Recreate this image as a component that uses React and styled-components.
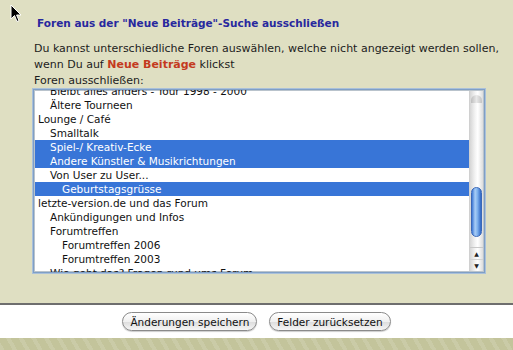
import React from 'react';
import styled, { createGlobalStyle } from 'styled-components';

const GlobalStyle = createGlobalStyle`
  html, body {
    margin: 0;
    padding: 0;
    background: #ffffff;
  }
  body {
    font-family: "DejaVu Sans", "Liberation Sans", sans-serif;
    color: #1c1c1c;
  }
`;

const Screen = styled.div`
  position: relative;
  width: 513px;
  height: 350px;
  overflow: hidden;
  display: flex;
  flex-direction: column;
`;

const Panel = styled.div`
  height: 303px;
  background: #dfdfc2;
  box-sizing: border-box;
  padding: 16px 0 0 33px;
  display: flex;
  flex-direction: column;
`;

const Title = styled.h3`
  margin: 0 0 0 4px;
  font-size: 10.5px;
  font-weight: bold;
  color: #28289e;
  line-height: 14px;
`;

const Intro = styled.p`
  margin: 11px 0 0 1px;
  font-size: 11px;
  line-height: 16px;
`;

const Highlight = styled.span`
  color: #c43a1e;
  font-weight: bold;
`;

const ListBox = styled.div`
  margin-top: 0;
  width: 452px;
  height: 184px;
  box-sizing: border-box;
  border: 1px solid #7f9fc6;
  box-shadow: 0 0 0 1px #a9c0da, inset 0 0 0 1px #b9c3cc;
  background: #ffffff;
  display: flex;
  overflow: hidden;
`;

const Items = styled.ul`
  flex: 1;
  list-style: none;
  margin: -6px 0 0 1px;
  padding: 0;
`;

const Item = styled.li`
  height: 14px;
  line-height: 14px;
  font-size: 10.5px;
  white-space: nowrap;
  padding-left: ${p => 3 + p.$level * 12}px;
  background: ${p => (p.$selected ? '#3875d7' : 'transparent')};
  color: ${p => (p.$selected ? '#ffffff' : '#111111')};
`;

const Scrollbar = styled.div`
  width: 13px;
  margin: 1px 1px 1px 0;
  display: flex;
  flex-direction: column;
  background: linear-gradient(to right, #d6d6d6, #f4f4f4 40%, #ffffff 60%, #dcdcdc);
  border-left: 1px solid #d0d0d0;
`;

const Track = styled.div`
  flex: 1;
  display: flex;
  flex-direction: column;
  padding: 4px 1px 6px 1px;
`;

const TrackCap = styled.div`
  height: 8px;
  border-radius: 6px 6px 0 0;
  background: linear-gradient(to right, #bdbdbd, #e8e8e8 50%, #c4c4c4);
`;

const Thumb = styled.div`
  height: 50px;
  margin-top: ${p => p.$offset}px;
  border-radius: 6px;
  border: 1px solid #3a68b8;
  box-sizing: border-box;
  background: linear-gradient(to right, #3d78d6, #a9cdf6 35%, #7fb2ee 60%, #2f66c4);
`;

const Arrows = styled.div`
  display: flex;
  flex-direction: column;
  border-top: 1px solid #c8c8c8;
`;

const Arrow = styled.div`
  height: 11px;
  display: flex;
  align-items: center;
  justify-content: center;
  font-size: 6px;
  color: #222;
  border-top: ${p => (p.$down ? '1px solid #d4d4d4' : 'none')};
`;

const Divider = styled.div`
  height: 2px;
  background: #6e6e6e;
`;

const Footer = styled.div`
  height: 33px;
  background: #ffffff;
  display: flex;
  align-items: center;
  justify-content: center;
  gap: 12px;
`;

const Button = styled.button`
  height: 19px;
  padding: 0 7px;
  border-radius: 10px;
  border: 1px solid #8a8a8a;
  background: linear-gradient(to bottom, #ffffff, #f0f0f0 50%, #dedede 55%, #f6f6f6);
  font-family: "DejaVu Sans", "Liberation Sans", sans-serif;
  font-size: 10.5px;
  color: #111;
  box-shadow: 0 1px 1px rgba(0, 0, 0, 0.2);
`;

const Pattern = styled.div`
  flex: 1;
  background:
    repeating-linear-gradient(60deg, rgba(255,255,255,0.12) 0 4px, transparent 4px 11px),
    #c3c49b;
`;

const Cursor = styled.svg`
  position: absolute;
  left: 10px;
  top: 4px;
`;

const rows = [
  { label: 'Bleibt alles anders - Tour 1998 - 2000', level: 1 },
  { label: 'Ältere Tourneen', level: 1 },
  { label: 'Lounge / Café', level: 0 },
  { label: 'Smalltalk', level: 1 },
  { label: 'Spiel-/ Kreativ-Ecke', level: 1, selected: true },
  { label: 'Andere Künstler & Musikrichtungen', level: 1, selected: true },
  { label: 'Von User zu User...', level: 1 },
  { label: 'Geburtstagsgrüsse', level: 2, selected: true },
  { label: 'letzte-version.de und das Forum', level: 0 },
  { label: 'Ankündigungen und Infos', level: 1 },
  { label: 'Forumtreffen', level: 1 },
  { label: 'Forumtreffen 2006', level: 2 },
  { label: 'Forumtreffen 2003', level: 2 },
  { label: 'Wie geht das? Fragen rund ums Forum', level: 1 },
];

export default function App() {
  return (
    <Screen>
      <GlobalStyle />
      <Panel>
        <Title>Foren aus der "Neue Beiträge"-Suche ausschließen</Title>
        <Intro>
          Du kannst unterschiedliche Foren auswählen, welche nicht angezeigt werden sollen,<br />
          wenn Du auf <Highlight>Neue Beiträge</Highlight> klickst<br />
          Foren ausschließen:
        </Intro>
        <ListBox>
          <Items>
            {rows.map(r => (
              <Item key={r.label} $level={r.level} $selected={r.selected}>{r.label}</Item>
            ))}
          </Items>
          <Scrollbar>
            <Track>
              <TrackCap />
              <Thumb $offset={84} />
            </Track>
            <Arrows>
              <Arrow>▲</Arrow>
              <Arrow $down>▼</Arrow>
            </Arrows>
          </Scrollbar>
        </ListBox>
      </Panel>
      <Divider />
      <Footer>
        <Button>Änderungen speichern</Button>
        <Button>Felder zurücksetzen</Button>
      </Footer>
      <Pattern />
      <Cursor width="12" height="19" viewBox="0 0 12 19">
        <path d="M1 1 L1 15 L4.5 11.5 L7 17.5 L9 16.6 L6.6 11 L11 11 Z" fill="#000" stroke="#fff" strokeWidth="1" />
      </Cursor>
    </Screen>
  );
}
